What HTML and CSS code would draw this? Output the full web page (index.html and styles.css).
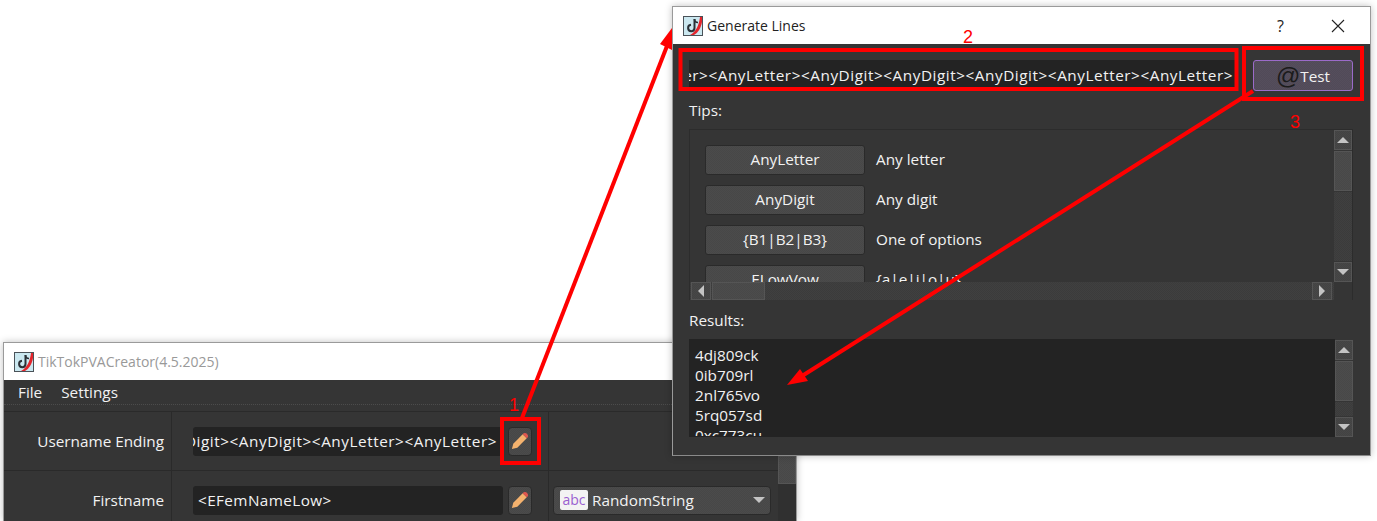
FILE: index.html
```html
<!DOCTYPE html>
<html lang="en">

<head>
    <meta charset="UTF-8">
    <meta name="viewport" content="width=device-width, initial-scale=1.0">
    <title>TikTokPVACreator annotated</title>
    <link rel="stylesheet" href="styles.css">
</head>

<body>
    <svg width="0" height="0" class="defs">
        <symbol id="app-icon" viewBox="0 0 20 20">
            <rect x="0.5" y="0.5" width="19" height="19" fill="#cbe8f0" stroke="#4a5258"></rect>
            <path d="M7 19 C13 16 16 9 17 1 L19 1 L19 6 C18 12 15 17 11 19 Z" fill="#e3242b"></path>
            <path d="M11.5 3 V12 A3.2 3.2 0 1 1 8 8.8" fill="none" stroke="#2a3036" stroke-width="2"></path>
            <path d="M11.5 3 C11.5 5 13 6.5 15 6.5" fill="none" stroke="#2a3036" stroke-width="1.6"></path>
        </symbol>
        <symbol id="pencil" viewBox="0 0 20 20">
            <path d="M1 19 L2.5 13 L13 2.5 L17.5 7 L7 17.5 Z" fill="#f4b26e"></path>
            <path d="M14 1.5 Q15.5 0.5 17 1.5 L18.5 3 Q19.5 4.5 18.5 6 L17.5 7 L13 2.5 Z" fill="#e0574f"></path>
        </symbol>
    </svg>

    <div class="window back-window">
        <div class="titlebar">
            <svg class="app-icon"><use href="#app-icon"></use></svg>
            <span class="title-muted">TikTokPVACreator(4.5.2025)</span>
        </div>
        <div class="client">
            <div class="menubar">
                <span>File</span>
                <span>Settings</span>
            </div>
            <div class="main-area">
                <div class="form">
                    <div class="form-row">
                        <div class="form-label">Username Ending</div>
                        <div class="form-field">
                            <div class="line-edit"><span>&lt;AnyDigit&gt;&lt;AnyDigit&gt;&lt;AnyLetter&gt;&lt;AnyLetter&gt;</span></div>
                            <button class="icon-btn"><svg><use href="#pencil"></use></svg></button>
                        </div>
                        <div class="form-extra"></div>
                    </div>
                    <div class="form-row">
                        <div class="form-label">Firstname</div>
                        <div class="form-field">
                            <div class="line-edit left"><span>&lt;EFemNameLow&gt;</span></div>
                            <button class="icon-btn"><svg><use href="#pencil"></use></svg></button>
                        </div>
                        <div class="form-extra">
                            <div class="combo">
                                <span class="abc">abc</span>
                                <span class="combo-text">RandomString</span>
                                <i class="arrow down"></i>
                            </div>
                        </div>
                    </div>
                </div>
                <div class="vbar main-bar">
                    <div class="thumb"></div>
                </div>
            </div>
        </div>
    </div>

    <div class="window dialog">
        <div class="titlebar">
            <svg class="app-icon"><use href="#app-icon"></use></svg>
            <span>Generate Lines</span>
            <span class="help">?</span>
            <svg class="close" width="14" height="14" viewBox="0 0 14 14"><path d="M1 1 L13 13 M13 1 L1 13" stroke="#222" stroke-width="1.1"></path></svg>
        </div>
        <div class="dialog-body">
            <div class="top-row">
                <div class="line-edit wide"><span>&lt;AnyLetter&gt;&lt;AnyLetter&gt;&lt;AnyDigit&gt;&lt;AnyDigit&gt;&lt;AnyDigit&gt;&lt;AnyLetter&gt;&lt;AnyLetter&gt;</span></div>
                <button class="test-btn"><span class="at">@</span>Test</button>
            </div>
            <div class="group-label tips-label">Tips:</div>
            <div class="scroll-area">
                <div class="scroll-top">
                    <div class="tips">
                        <div class="tip"><button class="tip-btn">AnyLetter</button><span class="tip-text">Any letter</span></div>
                        <div class="tip"><button class="tip-btn">AnyDigit</button><span class="tip-text">Any digit</span></div>
                        <div class="tip"><button class="tip-btn">{B1|B2|B3}</button><span class="tip-text">One of options</span></div>
                        <div class="tip"><button class="tip-btn">ELowVow</button><span class="tip-text">{a|e|i|o|u}</span></div>
                    </div>
                    <div class="vbar">
                        <div class="sb-btn"><i class="arrow up"></i></div>
                        <div class="thumb"></div>
                        <div class="track"></div>
                        <div class="sb-btn"><i class="arrow down"></i></div>
                    </div>
                </div>
                <div class="hbar">
                    <div class="sb-btn"><i class="arrow left"></i></div>
                    <div class="hthumb"></div>
                    <div class="track"></div>
                    <div class="sb-btn"><i class="arrow right"></i></div>
                    <div class="corner"></div>
                </div>
            </div>
            <div class="group-label results-label">Results:</div>
            <div class="results">
                <div class="results-text">4dj809ck<br>0ib709rl<br>2nl765vo<br>5rq057sd<br>0xc773cu</div>
                <div class="vbar">
                    <div class="sb-btn"><i class="arrow up"></i></div>
                    <div class="thumb"></div>
                    <div class="track"></div>
                    <div class="sb-btn"><i class="arrow down"></i></div>
                </div>
            </div>
        </div>
    </div>

    <!-- red annotations on top of the screenshot -->
    <svg class="marks" width="1377" height="521" viewBox="0 0 1377 521">
        <g fill="none" stroke="#f00" stroke-width="4">
            <rect x="502" y="419" width="37" height="44"></rect>
            <rect x="680.5" y="50" width="556" height="39"></rect>
            <rect x="1244" y="48" width="118" height="51"></rect>
            <path d="M522 418 L667 46"></path>
            <path d="M1253 91 L802 376"></path>
        </g>
        <path d="M672 28 L672 50 L660 44 Z" fill="#f00"></path>
        <path d="M787 385 L800 369 L808 381 Z" fill="#f00"></path>
    </svg>
    <span class="mark-num num-1">1</span>
    <span class="mark-num num-2">2</span>
    <span class="mark-num num-3">3</span>
</body>

</html>
```

FILE: styles.css
```css
html,
body {
    margin: 0;
    height: 521px;
    overflow: hidden;
    background: white;
}

body {
    position: relative;
    font-family: "Open Sans", "Noto Sans", sans-serif;
    font-size: 15.3px;
    color: #f2f2f2;
}

button {
    font: inherit;
    color: inherit;
    padding: 0;
}

.defs {
    position: absolute;
}

.window {
    position: absolute;
    box-sizing: border-box;
    display: flex;
    flex-direction: column;
    border: 1px solid #9a9a9a;
    border-bottom: 0;
    background: #353535;
    box-shadow: 0 0 7px rgba(0, 0, 0, 0.25);
}

.titlebar {
    display: flex;
    align-items: center;
    flex: none;
    height: 37px;
    padding: 0 10px;
    gap: 4px;
    background: white;
    color: #222;
    font-size: 14px;
}

.app-icon {
    width: 20px;
    height: 20px;
}

.title-muted {
    color: #999;
}

/* back window */
.back-window {
    left: 3px;
    top: 342px;
    width: 794px;
    height: 179px;
}

.client {
    flex: 1;
    display: flex;
    flex-direction: column;
}

.menubar {
    display: flex;
    gap: 19px;
    height: 24px;
    padding-left: 14px;
    align-items: center;
    border-bottom: 1px dotted #4c4c4c;
}

.main-area {
    flex: 1;
    display: flex;
    margin-top: 6px;
    border-top: 1px solid #2a2a2a;
}

.form {
    flex: 1;
}

.form-row {
    display: flex;
    height: 58px;
    border-bottom: 1px solid #2a2a2a;
}

.form-label {
    width: 160px;
    padding-right: 7px;
    display: flex;
    align-items: center;
    justify-content: flex-end;
    white-space: nowrap;
    border-right: 1px solid #2a2a2a;
}

.form-field {
    width: 377px;
    box-sizing: border-box;
    padding: 0 16px 0 21px;
    display: flex;
    align-items: center;
    gap: 5px;
    border-right: 1px solid #2a2a2a;
}

.form-extra {
    flex: 1;
    display: flex;
    align-items: center;
    padding: 0 7px 0 4px;
}

.line-edit {
    flex: 1;
    min-width: 0;
    height: 29px;
    display: flex;
    align-items: center;
    justify-content: flex-end;
    padding-right: 6px;
    overflow: hidden;
    white-space: nowrap;
    letter-spacing: 0.55px;
    background: #232323;
    border-radius: 3px;
}

.line-edit span {
    flex: none;
}

.line-edit.left {
    justify-content: flex-start;
    padding: 0 5px;
    letter-spacing: 0.4px;
}

.icon-btn {
    width: 24px;
    height: 29px;
    display: flex;
    align-items: center;
    justify-content: center;
    border: 1px solid #2a2a2a;
    border-radius: 4px;
    background: #474747;
}

.icon-btn svg {
    width: 18px;
    height: 18px;
}

.combo {
    flex: 1;
    height: 29px;
    box-sizing: border-box;
    display: flex;
    align-items: center;
    gap: 4px;
    padding: 0 5px 0 6px;
    border: 1px solid #2a2a2a;
    border-radius: 4px;
    background: #474747;
}

.abc {
    width: 28px;
    height: 20px;
    border-radius: 2px;
    background: #f3f3f3;
    color: #9a5fd0;
    font-size: 14px;
    line-height: 19px;
    text-align: center;
}

.combo-text {
    flex: 1;
}

.main-bar {
    width: 18px;
    margin-top: 44px;
    background: #303030;
}

.main-bar .thumb {
    height: 28px;
    margin-top: 0;
}

/* dialog */
.dialog {
    left: 672px;
    top: 6px;
    width: 699px;
    height: 450px;
    border-bottom: 1px solid #8a8a8a;
}

.help {
    margin-left: auto;
    margin-right: 43px;
    font-size: 16px;
}

.close {
    margin-right: 15px;
}

.dialog-body {
    flex: 1;
    display: flex;
    flex-direction: column;
    padding: 16px 17px 0 16px;
}

.top-row {
    display: flex;
    gap: 17px;
    height: 31px;
}

.line-edit.wide {
    flex: none;
    width: 547px;
    height: 28px;
    box-sizing: border-box;
    padding: 2px 3px 0 0;
    border-radius: 0;
}

.test-btn {
    width: 100px;
    display: flex;
    align-items: center;
    justify-content: center;
    border: 1px solid #9b6bc9;
    border-radius: 3px;
    background: #514a58;
}

.at {
    font-family: "Liberation Sans", sans-serif;
    font-size: 24px;
    line-height: 24px;
    color: #1b1b1b;
}

.group-label {
    height: 20px;
    line-height: 20px;
}

.tips-label {
    margin-top: 9px;
    margin-bottom: 9px;
}

.results-label {
    margin-top: 10px;
    margin-bottom: 9px;
}

.scroll-area {
    height: 171px;
    box-sizing: border-box;
    display: flex;
    flex-direction: column;
    border: 1px solid #2c2c2c;
}

.scroll-top {
    flex: none;
    height: 152px;
    display: flex;
}

.tips {
    flex: 1;
    overflow: hidden;
    padding: 15px 0 0 15px;
}

.tip {
    display: flex;
    align-items: center;
    gap: 11px;
    height: 30px;
    margin-bottom: 10px;
}

.tip-btn {
    width: 160px;
    height: 30px;
    padding-bottom: 2px;
    border: 1px solid #2a2a2a;
    border-radius: 3px;
    background-color: #474747;
}

.tip-text {
    margin-bottom: 2px;
}

.vbar {
    flex: none;
    width: 18px;
    display: flex;
    flex-direction: column;
    gap: 1px;
}

.sb-btn {
    flex: none;
    width: 18px;
    height: 20px;
    box-sizing: border-box;
    display: flex;
    align-items: center;
    justify-content: center;
    border: 1px solid #555;
    background: #434343;
}

.thumb {
    flex: none;
    height: 40px;
    box-sizing: border-box;
    border: 1px solid #555;
    background: #484848;
}

.track {
    flex: 1;
    background: #3b3b3b;
}

.hbar {
    flex: 1;
    display: flex;
    gap: 1px;
    padding-left: 1px;
    background: #3b3b3b;
}

.hbar .sb-btn {
    width: 20px;
    height: 18px;
}

.hthumb {
    width: 53px;
    box-sizing: border-box;
    border: 1px solid #555;
    background: #484848;
}

.corner {
    width: 18px;
    margin-left: 1px;
    background: #353535;
}

.results {
    height: 98px;
    display: flex;
    gap: 2px;
    background: #232323;
}

.results-text {
    flex: 1;
    height: 96px;
    margin-top: 1px;
    padding: 5px 0 0 6px;
    box-sizing: border-box;
    overflow: hidden;
    line-height: 20px;
}

.results .vbar {
    padding-top: 1px;
    background: #353535;
}

.arrow {
    width: 0;
    height: 0;
    border-style: solid;
    border-color: transparent;
}

.arrow.up {
    border-width: 0 6px 6px;
    border-bottom-color: #c4c4c4;
}

.arrow.down {
    border-width: 6px 6px 0;
    border-top-color: #c4c4c4;
}

.arrow.left {
    border-width: 6px 6px 6px 0;
    border-right-color: #c4c4c4;
}

.arrow.right {
    border-width: 6px 0 6px 6px;
    border-left-color: #c4c4c4;
}

/* dither on the Qt style widgets */
.icon-btn,
.combo,
.tip-btn,
.test-btn,
.sb-btn,
.thumb,
.hthumb,
.track,
.hbar {
    background-image: repeating-conic-gradient(rgba(255, 255, 255, 0.025) 0% 25%, transparent 0% 50%);
    background-size: 2px 2px;
}

/* annotations */
.marks {
    position: absolute;
    left: 0;
    top: 0;
}

.mark-num {
    position: absolute;
    font-family: "Liberation Sans", sans-serif;
    font-size: 18px;
    line-height: 20px;
    color: #f00;
}

.num-1 {
    left: 509px;
    top: 395px;
}

.num-2 {
    left: 963px;
    top: 27px;
}

.num-3 {
    left: 1290px;
    top: 112px;
}
```
